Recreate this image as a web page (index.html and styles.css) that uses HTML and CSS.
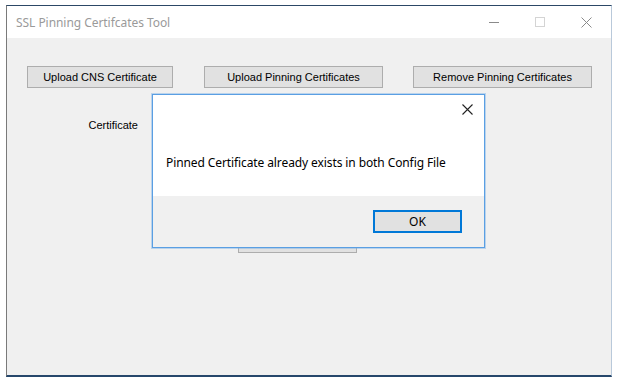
FILE: index.html
```html
<!DOCTYPE html>
<html lang="en">

<head>
    <meta charset="UTF-8">
    <title>SSL Pinning Certifcates Tool</title>
    <link rel="stylesheet" href="styles.css">
</head>

<body>
    <!-- Main window -->
    <div class="window">
        <div class="titlebar">
            <div class="title">SSL Pinning Certifcates Tool</div>
            <div class="controls">
                <span class="ctl">
                    <svg width="10" height="10" viewBox="0 0 10 10"><path d="M0 5.5h10" stroke="#8a8a8a" stroke-width="1"/></svg>
                </span>
                <span class="ctl">
                    <svg width="10" height="10" viewBox="0 0 10 10"><rect x="0.5" y="0.5" width="9" height="9" fill="none" stroke="#d4d4d4" stroke-width="1"/></svg>
                </span>
                <span class="ctl">
                    <svg width="11" height="11" viewBox="0 0 11 11"><path d="M0.5 0.5l10 10M10.5 0.5l-10 10" stroke="#8a8a8a" stroke-width="1"/></svg>
                </span>
            </div>
        </div>

        <div class="client">
            <div class="toolbar">
                <button class="btn btn-cns">Upload CNS Certificate</button>
                <button class="btn btn-wide">Upload Pinning Certificates</button>
                <button class="btn btn-wide">Remove Pinning Certificates</button>
            </div>

            <div class="cert-row">
                <label class="cert-label">Certificate</label>
                <div class="cert-box"></div>
            </div>

            <button class="btn btn-save">Save</button>
        </div>

        <!-- Message box -->
        <div class="msgbox">
            <div class="msg-body">
                <span class="msg-close">
                    <svg width="11" height="11" viewBox="0 0 11 11"><path d="M0.5 0.5l10 10M10.5 0.5l-10 10" stroke="#222" stroke-width="1.1"/></svg>
                </span>
                <p class="msg-text">Pinned Certificate already exists in both Config File</p>
            </div>
            <div class="msg-footer">
                <button class="btn-ok">OK</button>
            </div>
        </div>
    </div>
</body>

</html>
```

FILE: styles.css
```css
/* Base */
* {
    margin: 0;
    padding: 0;
    box-sizing: border-box;
}

body {
    background-color: #ffffff;
    font-family: 'Liberation Sans', Arial, sans-serif;
    color: #000;
}

/* Window frame */
.window {
    position: relative;
    width: 606px;
    height: 372px;
    margin: 5px 0 0 6px;
    border-top: 1px solid #2c4866;
    border-left: 1px solid #7a7a7a;
    border-right: 1px solid #b9c9da;
    border-bottom: 2px solid #26476b;
    background-color: #f0f0f0;
    display: flex;
    flex-direction: column;
}

.titlebar {
    height: 32px;
    background-color: #ffffff;
    display: flex;
    justify-content: space-between;
    align-items: center;
}

.title {
    padding-left: 9px;
    font-family: 'Noto Sans', 'Open Sans', sans-serif;
    font-size: 12px;
    color: #9a9a9a;
    letter-spacing: -0.05px;
}

.controls {
    display: flex;
    height: 100%;
    margin-right: 2px;
}

.ctl {
    width: 46px;
    height: 100%;
    display: flex;
    align-items: center;
    justify-content: center;
}

.client {
    flex: 1;
    padding: 28px 0 0 0;
}

/* Buttons */
.btn {
    height: 22px;
    background-color: #e1e1e1;
    border: 1px solid #adadad;
    font-family: 'Liberation Sans', Arial, sans-serif;
    font-size: 11px;
    color: #000;
}

.toolbar {
    display: flex;
    padding-left: 20px;
}

.btn-cns {
    width: 146px;
}

.btn-wide {
    width: 179px;
    margin-left: 31px;
}

.btn-wide + .btn-wide {
    margin-left: 30px;
}

.cert-row {
    display: flex;
    margin-top: 6px;
}

.cert-label {
    width: 131px;
    padding-top: 25px;
    text-align: right;
    font-size: 11px;
}

.cert-box {
    width: 320px;
    height: 128px;
    margin-left: 14px;
    background-color: #ffffff;
}

.btn-save {
    display: block;
    width: 119px;
    height: 23px;
    margin: 8px 0 0 231px;
}

/* Message box */
.msgbox {
    position: absolute;
    left: 145px;
    top: 88px;
    width: 333px;
    height: 154px;
    border: 1px solid #5a9fe3;
    box-shadow: 0 0 0 1px rgba(120, 175, 230, 0.45);
    display: flex;
    flex-direction: column;
}

.msg-body {
    position: relative;
    height: 101px;
    background-color: #ffffff;
}

.msg-close {
    position: absolute;
    top: 9px;
    right: 11px;
    display: flex;
}

.msg-text {
    padding: 59px 0 0 13px;
    font-family: 'Noto Sans', 'Open Sans', sans-serif;
    font-size: 12px;
    color: #000;
    letter-spacing: -0.1px;
}

.msg-footer {
    flex: 1;
    background-color: #f0f0f0;
    display: flex;
    justify-content: flex-end;
    align-items: flex-start;
    padding: 14px 22px 0 0;
}

.btn-ok {
    width: 89px;
    height: 23px;
    background-color: #e1e1e1;
    border: 2px solid #0078d7;
    font-family: 'Noto Sans', 'Open Sans', sans-serif;
    font-size: 12px;
    color: #000;
}
```
